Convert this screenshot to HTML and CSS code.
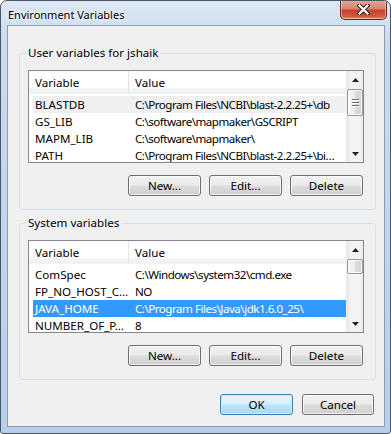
FILE: index.html
```html
<!DOCTYPE html>
<html lang="en">
<head>
  <meta charset="UTF-8" />
  <title>Environment Variables</title>
  <link rel="stylesheet" href="styles.css">
</head>
<body>

  <div class="window">
    <div class="titlebar">
      <span class="title">Environment Variables</span>
      <button class="close" title="Close">
        <svg width="13" height="11" viewBox="0 0 13 11">
          <path d="M2.5 1.5 L10.5 9.5 M10.5 1.5 L2.5 9.5" stroke="#3a2420" stroke-width="4.2" stroke-linecap="square" fill="none"/>
          <path d="M2.5 1.5 L10.5 9.5 M10.5 1.5 L2.5 9.5" stroke="#ffffff" stroke-width="2.2" stroke-linecap="square" fill="none"/>
        </svg>
      </button>
    </div>

    <div class="client">

      <!-- user variables -->
      <fieldset class="group">
        <legend>User variables for jshaik</legend>
        <div class="list">
          <div class="list-body">
            <div class="list-head">
              <span class="head-var">Variable</span>
              <span class="head-val">Value</span>
            </div>
            <div class="row inactive"><span class="col-var">BLASTDB</span><span class="col-val">C:\Program Files\NCBI\blast-2.2.25+\db</span></div>
            <div class="row"><span class="col-var">GS_LIB</span><span class="col-val">C:\software\mapmaker\GSCRIPT</span></div>
            <div class="row"><span class="col-var">MAPM_LIB</span><span class="col-val">C:\software\mapmaker\</span></div>
            <div class="row"><span class="col-var">PATH</span><span class="col-val">C:\Program Files\NCBI\blast-2.2.25+\bi…</span></div>
          </div>
          <div class="scrollbar">
            <div class="arrow">
              <svg width="7" height="4" viewBox="0 0 7 4"><path d="M0 4 L3.5 0 L7 4 Z" fill="#222"/></svg>
            </div>
            <div class="thumb grip">
              <span></span><span></span><span></span>
            </div>
            <div class="track"></div>
            <div class="arrow">
              <svg width="7" height="4" viewBox="0 0 7 4"><path d="M0 0 L7 0 L3.5 4 Z" fill="#222"/></svg>
            </div>
          </div>
        </div>
        <div class="buttons">
          <button class="btn">New...</button>
          <button class="btn">Edit...</button>
          <button class="btn">Delete</button>
        </div>
      </fieldset>

      <!-- system variables -->
      <fieldset class="group system">
        <legend>System variables</legend>
        <div class="list">
          <div class="list-body">
            <div class="list-head">
              <span class="head-var">Variable</span>
              <span class="head-val">Value</span>
            </div>
            <div class="row"><span class="col-var">ComSpec</span><span class="col-val">C:\Windows\system32\cmd.exe</span></div>
            <div class="row"><span class="col-var">FP_NO_HOST_C…</span><span class="col-val">NO</span></div>
            <div class="row selected"><span class="col-var">JAVA_HOME</span><span class="col-val">C:\Program Files\Java\jdk1.6.0_25\</span></div>
            <div class="row"><span class="col-var">NUMBER_OF_P…</span><span class="col-val">8</span></div>
          </div>
          <div class="scrollbar">
            <div class="arrow">
              <svg width="7" height="4" viewBox="0 0 7 4"><path d="M0 4 L3.5 0 L7 4 Z" fill="#222"/></svg>
            </div>
            <div class="thumb small"></div>
            <div class="track"></div>
            <div class="arrow">
              <svg width="7" height="4" viewBox="0 0 7 4"><path d="M0 0 L7 0 L3.5 4 Z" fill="#222"/></svg>
            </div>
          </div>
        </div>
        <div class="buttons">
          <button class="btn">New...</button>
          <button class="btn">Edit...</button>
          <button class="btn">Delete</button>
        </div>
      </fieldset>

      <div class="dialog-buttons">
        <button class="btn default">OK</button>
        <button class="btn">Cancel</button>
      </div>
    </div>
  </div>

</body>
</html>
```

FILE: styles.css
```css
* {
  box-sizing: border-box;
}

body {
  margin: 0;
  font-family: "Noto Sans", "Open Sans", sans-serif;
  font-size: 11.6px;
  color: #000;
  background: #fff;
}

.window {
  width: 391px;
  height: 434px;
  border: 1px solid #4b5766;
  border-radius: 7px 7px 3px 3px;
  padding: 0 5px 6px 6px;
  display: flex;
  flex-direction: column;
  background: linear-gradient(to bottom, #dde8f4 0, #cadbee 40px, #b6cfea 100%);
  overflow: hidden;
}

.titlebar {
  height: 27px;
  display: flex;
  align-items: flex-start;
}

.title {
  padding-left: 1px;
  margin-top: 6px;
  font-size: 11px;
  line-height: 16px;
  color: #000;
  text-shadow: 0 0 6px #fff, 0 0 3px #fff;
}

.close {
  margin-left: auto;
  margin-top: -1px;
  margin-right: -2px;
  width: 47px;
  height: 20px;
  padding: 0;
  border: 1px solid #5b2b22;
  border-top: none;
  border-radius: 0 0 5px 5px;
  background: linear-gradient(to bottom, #e9a99a 0, #d9826f 45%, #c4432c 55%, #d0583c 85%, #e2866a 100%);
  box-shadow: inset 0 0 0 1px rgba(255, 220, 210, 0.55);
  display: flex;
  align-items: center;
  justify-content: center;
}

.close svg {
  display: block;
}

.client {
  flex: 1;
  background: #f0f0f0;
  border: 1px solid #8c9cb0;
  padding: 19px 8px 11px 11px;
}

.group {
  margin: 0;
  border: 1px solid #d5dfe5;
  border-radius: 3px;
  padding: 9px 11px 13px 8px;
  min-width: 0;
}

.group legend {
  margin-left: -2px;
  padding: 0 2px;
  line-height: 16px;
}

.group.system {
  margin-top: 5px;
}

.list {
  height: 93px;
  border: 1px solid #828790;
  background: #fff;
  display: flex;
}

.list-body {
  flex: 1;
  overflow: hidden;
  min-width: 0;
}

.list-head {
  height: 23px;
  display: flex;
  align-items: center;
  background: linear-gradient(to bottom, #fff 0, #fff 72%, #f4f5f7 72%, #f1f2f4 100%);
  margin-bottom: 2px;
}

.head-var {
  width: 100px;
  flex-shrink: 0;
  padding-left: 6px;
  border-right: 1px solid #e3e5e8;
  height: 100%;
  display: flex;
  align-items: center;
}

.head-val {
  padding-left: 6px;
}

.row {
  height: 17px;
  margin-left: 4px;
  display: flex;
  align-items: center;
  white-space: nowrap;
  line-height: 13px;
}

.row.inactive {
  background: #f0f0f0;
}

.row.selected {
  background: #3399ff;
  color: #fff;
}

.col-var {
  width: 96px;
  flex-shrink: 0;
  padding-left: 2px;
}

.col-val {
  padding-left: 6px;
  letter-spacing: -0.5px;
}

.scrollbar {
  width: 17px;
  flex-shrink: 0;
  display: flex;
  flex-direction: column;
  background: linear-gradient(to right, #e6e6e6 0, #f3f3f3 20%, #f3f3f3 80%, #e9e9e9 100%);
  border-left: 1px solid #ececec;
}

.arrow {
  height: 17px;
  display: flex;
  align-items: center;
  justify-content: center;
}

.arrow svg {
  display: block;
}

.thumb {
  margin: 1px 0 0 0;
  height: 27px;
  border: 1px solid #979797;
  border-radius: 2px;
  background: linear-gradient(to right, #f6f6f6 0, #ececec 50%, #dcdcdc 51%, #d2d2d2 100%);
  box-shadow: inset 0 0 0 1px #fbfbfb;
  display: flex;
  flex-direction: column;
  align-items: center;
  justify-content: center;
  gap: 2px;
}

.thumb.small {
  height: 15px;
}

.thumb span {
  width: 7px;
  height: 1px;
  background: #6f6f6f;
  box-shadow: 0 1px 0 #fff;
}

.track {
  flex: 1;
}

.buttons {
  display: flex;
  justify-content: flex-end;
  gap: 8px;
  margin-top: 12px;
  padding-right: 1px;
}

.btn {
  width: 73px;
  height: 21px;
  padding: 0;
  font-family: inherit;
  font-size: 11.6px;
  color: #000;
  border: 1px solid #707070;
  border-radius: 3px;
  background: linear-gradient(to bottom, #f2f2f2 0, #ebebeb 48%, #dddddd 52%, #cfcfcf 100%);
  box-shadow: inset 0 0 0 1px rgba(255, 255, 255, 0.7);
}

.btn.default {
  border-color: #3c7fb1;
  background: linear-gradient(to bottom, #eaf6fd 0, #d9f0fc 48%, #bee6fd 52%, #a7d9f5 100%);
  box-shadow: inset 0 0 0 1px #c4f0ff;
}

.dialog-buttons {
  display: flex;
  justify-content: flex-end;
  gap: 9px;
  margin-top: 14px;
  padding-right: 2px;
}

.dialog-buttons .btn:last-child {
  width: 72px;
}
```
